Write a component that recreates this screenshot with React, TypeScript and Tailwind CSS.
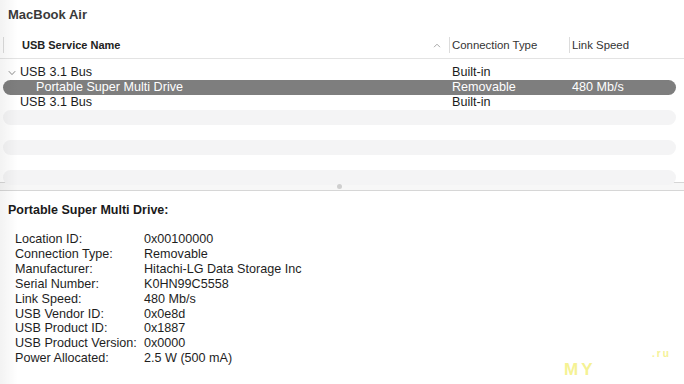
import React from "react";

const Chevron = () => (
  <svg width="8" height="6" viewBox="0 0 8 6" className="shrink-0">
    <path d="M0.8 1.2 L4 4.6 L7.2 1.2" fill="none" stroke="#8a8a8a" strokeWidth="1" />
  </svg>
);

const SortUp = () => (
  <svg width="8" height="5" viewBox="0 0 8 5">
    <path d="M1 4.2 L4 1.2 L7 4.2" fill="none" stroke="#a8a8a8" strokeWidth="1" />
  </svg>
);

const details: [string, string][] = [
  ["Location ID:", "0x00100000"],
  ["Connection Type:", "Removable"],
  ["Manufacturer:", "Hitachi-LG Data Storage Inc"],
  ["Serial Number:", "K0HN99C5558"],
  ["Link Speed:", "480 Mb/s"],
  ["USB Vendor ID:", "0x0e8d"],
  ["USB Product ID:", "0x1887"],
  ["USB Product Version:", "0x0000"],
  ["Power Allocated:", "2.5 W (500 mA)"],
];

export default function App() {
  return (
    <div className="relative w-[684px] h-[384px] overflow-hidden bg-white font-['Liberation_Sans',Arial,sans-serif] text-[#1c1c1c]">
      {/* Top pane */}
      <div className="h-[182px] flex flex-col">
        <div className="h-[30px] shrink-0 pl-[8px] pt-[6px] text-[13px] leading-[18px] font-bold text-[#3a3a3a]">
          MacBook Air
        </div>
        <div className="h-[29px] shrink-0 border-b border-[#e3e3e3] pt-[7px]">
          <div className="ml-[3px] grid grid-cols-[446px_120px_107px] h-[16px] text-[11.4px] leading-[16px]">
            <div className="border-l border-[#dcdcdc] pl-[18px] pr-[8px] flex items-center justify-between">
              <span className="font-bold text-[11px] text-[#222]">USB Service Name</span>
              <SortUp />
            </div>
            <div className="border-l border-[#dcdcdc] pl-[2px] text-[#333]">Connection Type</div>
            <div className="border-l border-[#dcdcdc] pl-[2px] text-[#333]">Link Speed</div>
          </div>
        </div>
        <div className="pt-[6px] ml-[3px] w-[673px] flex flex-col text-[12.6px] leading-[15px]">
          <div className="grid grid-cols-[446px_120px_107px] h-[15px]">
            <div className="pl-[5px] flex items-center gap-[4px]">
              <Chevron />
              <span>USB 3.1 Bus</span>
            </div>
            <div className="pl-[3px]">Built-in</div>
            <div className="pl-[3px]"></div>
          </div>
          <div className="grid grid-cols-[446px_120px_107px] h-[15px] bg-[#7e7e7e] rounded-full text-white">
            <div className="pl-[33px]">Portable Super Multi Drive</div>
            <div className="pl-[3px]">Removable</div>
            <div className="pl-[3px]">480 Mb/s</div>
          </div>
          <div className="grid grid-cols-[446px_120px_107px] h-[15px]">
            <div className="pl-[17px]">USB 3.1 Bus</div>
            <div className="pl-[3px]">Built-in</div>
            <div className="pl-[3px]"></div>
          </div>
          <div className="h-[15px] shrink-0 bg-[#f4f4f5] rounded-full" />
          <div className="h-[15px] shrink-0" />
          <div className="h-[15px] shrink-0 bg-[#f4f4f5] rounded-full" />
          <div className="h-[15px] shrink-0" />
          <div className="h-[15px] shrink-0 bg-[#f4f4f5] rounded-full" />
        </div>
      </div>
      {/* Divider */}
      <div className="h-[9px] border-t border-b border-[#d6d6d6] bg-[#f7f7f7] flex items-center justify-center pr-[6px]">
        <div className="w-[5px] h-[5px] rounded-full bg-[#cfcfcf]" />
      </div>
      {/* Bottom pane */}
      <div className="pl-[8px] pt-[11px]">
        <div className="text-[12.5px] leading-[16px] font-bold text-[#1a1a1a]">Portable Super Multi Drive:</div>
        <div className="mt-[14px] pl-[7px] grid grid-cols-[129px_1fr] text-[12.6px] leading-[14.9px] text-[#1e1e1e]">
          {details.map(([k, v]) => (
            <React.Fragment key={k}>
              <div>{k}</div>
              <div>{v}</div>
            </React.Fragment>
          ))}
        </div>
      </div>
      {/* left edge shading */}
      <div className="pointer-events-none absolute left-0 top-0 h-full w-[18px] bg-gradient-to-r from-black/[0.05] to-transparent" />
      {/* watermark */}
      <div className="pointer-events-none absolute left-[564px] top-[357px] text-[17px] font-bold tracking-[3px] text-[#f3ef7a] opacity-80">
        MY
      </div>
      <div className="pointer-events-none absolute left-[652px] top-[346px] text-[10px] font-bold tracking-[2px] text-[#f3ef7a] opacity-80">
        .ru
      </div>
    </div>
  );
}
